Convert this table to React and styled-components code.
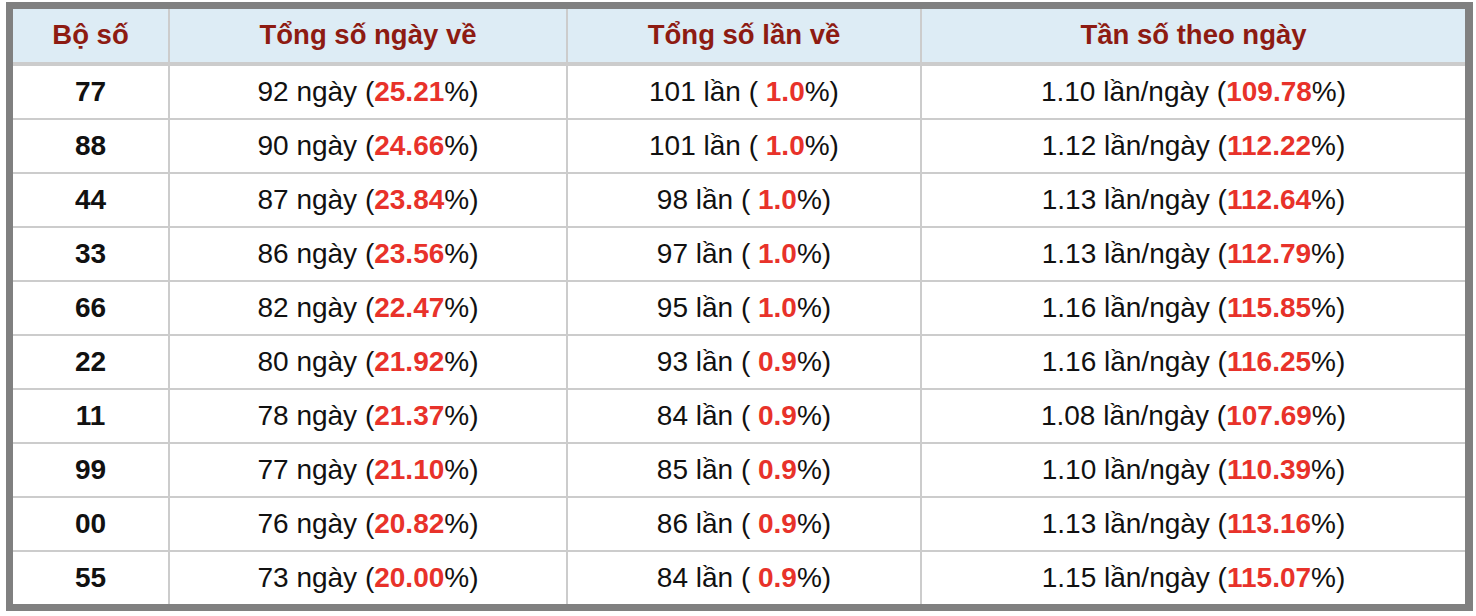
import React from "react";
import styled, { createGlobalStyle } from "styled-components";

const Global = createGlobalStyle`
  html, body { margin: 0; padding: 0; background: #ffffff; }
  body { padding: 2px 0 0 6px; font-family: "Liberation Sans", Arial, Helvetica, sans-serif; }
`;

const Frame = styled.div`
  display: inline-block;
  border: 7px solid #808080;
  border-right-width: 8px;
  background: #cccccc;
`;

const Table = styled.div`
  display: grid;
  grid-template-columns: 155px 396px 352px 543px;
  grid-template-rows: 55px repeat(10, 52px);
  column-gap: 2px;
  row-gap: 2px;
  background: #cccccc;
`;

const HeaderCell = styled.div`
  display: flex;
  align-items: center;
  justify-content: center;
  background: #ddecf5;
  border-bottom: 2px solid #cccccc;
  color: #8d1b12;
  font-weight: bold;
  font-size: 27.5px;
  line-height: 1;
  padding-bottom: 1px;
  box-sizing: border-box;
`;

const Cell = styled.div`
  display: flex;
  align-items: center;
  justify-content: center;
  background: #ffffff;
  color: #111111;
  font-size: 28px;
  line-height: 1;
  white-space: pre;
  font-weight: ${(p) => (p.$strong ? "bold" : "normal")};
`;

const Hot = styled.b`
  color: #e8322a;
  font-weight: bold;
`;

const rows = [
  ["77", "92", "25.21", "101", "1.0", "1.10", "109.78"],
  ["88", "90", "24.66", "101", "1.0", "1.12", "112.22"],
  ["44", "87", "23.84", "98", "1.0", "1.13", "112.64"],
  ["33", "86", "23.56", "97", "1.0", "1.13", "112.79"],
  ["66", "82", "22.47", "95", "1.0", "1.16", "115.85"],
  ["22", "80", "21.92", "93", "0.9", "1.16", "116.25"],
  ["11", "78", "21.37", "84", "0.9", "1.08", "107.69"],
  ["99", "77", "21.10", "85", "0.9", "1.10", "110.39"],
  ["00", "76", "20.82", "86", "0.9", "1.13", "113.16"],
  ["55", "73", "20.00", "84", "0.9", "1.15", "115.07"],
];

const headers = ["Bộ số", "Tổng số ngày về", "Tổng số lần về", "Tần số theo ngày"];

export default function App() {
  return (
    <>
      <Global />
      <Frame>
        <Table>
          {headers.map((h) => (
            <HeaderCell key={h}>{h}</HeaderCell>
          ))}
          {rows.map(([pair, days, dayPct, times, timePct, freq, freqPct]) => (
            <React.Fragment key={pair}>
              <Cell $strong>{pair}</Cell>
              <Cell>
                {days} ngày (<Hot>{dayPct}</Hot>%)
              </Cell>
              <Cell>
                {times} lần ( <Hot>{timePct}</Hot>%)
              </Cell>
              <Cell>
                {freq} lần/ngày (<Hot>{freqPct}</Hot>%)
              </Cell>
            </React.Fragment>
          ))}
        </Table>
      </Frame>
    </>
  );
}
